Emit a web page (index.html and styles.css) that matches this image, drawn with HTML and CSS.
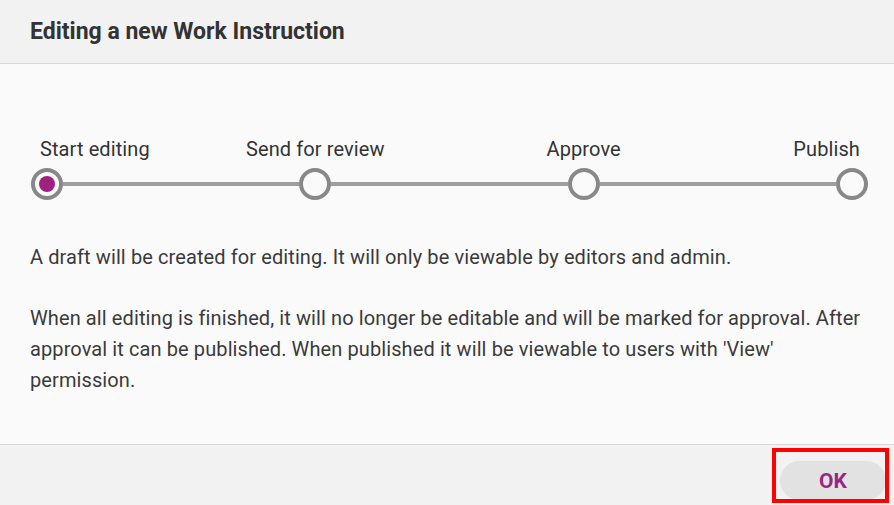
FILE: index.html
```html
<!DOCTYPE html>
<html>
<head>
<meta charset="utf-8">
<link rel="stylesheet" href="styles.css">
</head>
<body>
<div class="dialog">
  <header class="dialog-header">
    <h1 class="dialog-title">Editing a new Work Instruction</h1>
  </header>
  <main class="dialog-body">
    <div class="stepper">
      <div class="step step-first">
        <span class="step-label">Start editing</span>
        <span class="step-circle active"><span class="step-dot"></span></span>
      </div>
      <div class="connector"></div>
      <div class="step">
        <span class="step-label">Send for review</span>
        <span class="step-circle"></span>
      </div>
      <div class="connector"></div>
      <div class="step">
        <span class="step-label">Approve</span>
        <span class="step-circle"></span>
      </div>
      <div class="connector"></div>
      <div class="step step-last">
        <span class="step-label">Publish</span>
        <span class="step-circle"></span>
      </div>
    </div>
    <p class="info">A draft will be created for editing. It will only be viewable by editors and admin.</p>
    <p class="info">When all editing is finished, it will no longer be editable and will be marked for approval. After approval it can be published. When published it will be viewable to users with 'View' permission.</p>
  </main>
  <footer class="dialog-footer">
    <div class="ok-wrap">
      <button class="ok-btn">OK</button>
    </div>
  </footer>
</div>
</body>
</html>
```
FILE: styles.css
```css
html, body {
  margin: 0;
  padding: 0;
}
body {
  width: 894px;
  height: 505px;
  overflow: hidden;
  background: #fafafa;
  font-family: Roboto, "Liberation Sans", sans-serif;
  color: #3a3a3a;
}
.dialog {
  display: flex;
  flex-direction: column;
  height: 505px;
}
.dialog-header {
  height: 63px;
  background: #f2f2f2;
  border-bottom: 1px solid #d8d8d8;
  padding-left: 30px;
  display: flex;
  align-items: center;
}
.dialog-title {
  margin: 0;
  font-size: 23px;
  font-weight: 700;
  color: #333;
}
.dialog-body {
  height: 380px;
  padding: 73px 26px 0 31px;
  box-sizing: border-box;
}
.stepper {
  display: flex;
  align-items: flex-end;
}
.step {
  width: 32px;
  display: flex;
  flex-direction: column;
  align-items: center;
}
.step-first {
  align-items: flex-start;
}
.step-first .step-label {
  margin-left: 9px;
}
.step-last {
  align-items: flex-end;
}
.step-last .step-label {
  margin-right: 8px;
}
.step-label {
  white-space: nowrap;
  font-size: 20px;
  line-height: 24px;
  letter-spacing: 0.1px;
  color: #333;
  margin-bottom: 7px;
}
.step-circle {
  width: 32px;
  height: 32px;
  box-sizing: border-box;
  border: 4px solid #888;
  border-radius: 50%;
  background: #fafafa;
  display: flex;
  align-items: center;
  justify-content: center;
}
.step-dot {
  width: 16px;
  height: 16px;
  border-radius: 50%;
  background: #a0207f;
}
.connector {
  flex: 1;
  height: 4px;
  background: #9e9e9e;
  margin-bottom: 14px;
}
.info {
  margin: 0 0 0 -1px;
  font-size: 20px;
  line-height: 31px;
  letter-spacing: 0.1px;
  color: #3a3a3a;
}
.info:first-of-type {
  margin-top: 42px;
  margin-bottom: 30px;
}
.dialog-footer {
  flex: 1;
  background: #f2f2f2;
  border-top: 1px solid #d8d8d8;
  display: flex;
  justify-content: flex-end;
  align-items: flex-start;
}
.ok-wrap {
  position: relative;
  margin-top: 16px;
  margin-right: 8px;
}
.ok-wrap::after {
  content: "";
  position: absolute;
  left: -8px;
  right: -3px;
  top: -13px;
  bottom: -3px;
  border: 4px solid #ff0000;
  pointer-events: none;
}
.ok-btn {
  width: 106px;
  height: 39px;
  border: none;
  border-radius: 20px;
  background: #e2e2e2;
  color: #9b2583;
  font-family: Roboto, "Liberation Sans", sans-serif;
  font-size: 21px;
  font-weight: 700;
  padding: 0;
}
```
